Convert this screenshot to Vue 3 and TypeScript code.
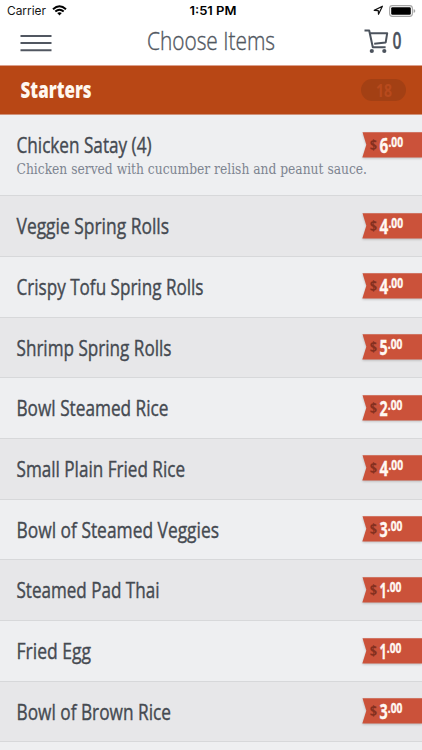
<script setup lang="ts">
interface MenuItem {
  name: string
  width: number
  dollars: string
  digitWidth: number
  note?: string
}

const items: MenuItem[] = [
  { name: 'Chicken Satay (4)', width: 135, dollars: '6', digitWidth: 8.8, note: 'Chicken served with cucumber relish and peanut sauce.' },
  { name: 'Veggie Spring Rolls', width: 152.5, dollars: '4', digitWidth: 8.8 },
  { name: 'Crispy Tofu Spring Rolls', width: 187, dollars: '4', digitWidth: 8.8 },
  { name: 'Shrimp Spring Rolls', width: 155, dollars: '5', digitWidth: 8.2 },
  { name: 'Bowl Steamed Rice', width: 152, dollars: '2', digitWidth: 8.2 },
  { name: 'Small Plain Fried Rice', width: 168.5, dollars: '4', digitWidth: 8.8 },
  { name: 'Bowl of Steamed Veggies', width: 202.5, dollars: '3', digitWidth: 8.2 },
  { name: 'Steamed Pad Thai', width: 143, dollars: '1', digitWidth: 7.2 },
  { name: 'Fried Egg', width: 74.5, dollars: '1', digitWidth: 7.2 },
  { name: 'Bowl of Brown Rice', width: 154.5, dollars: '3', digitWidth: 8.2 },
]
</script>

<template>
  <main class="screen">
    <div class="status">
      <div class="side">
        <svg class="carrier" width="40" height="20"><text x="0" y="15.3" textLength="39" lengthAdjust="spacingAndGlyphs">Carrier</text></svg>
        <svg class="wifi" width="15" height="11" viewBox="0 0 15 11">
          <path d="M1 4.2Q7.5-1.6 14 4.2" />
          <path d="M3.3 6.5Q7.5 2.9 11.7 6.5" />
          <path class="dot" d="M5.2 8.1Q7.5 6.3 9.8 8.1L7.5 10.5Z" />
        </svg>
      </div>
      <svg class="clock" width="48" height="20"><text x="0.5" y="15.3" textLength="47" lengthAdjust="spacingAndGlyphs">1:51 PM</text></svg>
      <div class="side right">
        <svg width="11" height="11" viewBox="0 0 11 11"><path class="arrow" d="M1.2 5.4L9.4 1.2L5.5 9.3L5.3 5.6Z" /></svg>
        <svg width="27" height="12" viewBox="0 0 27 12">
          <rect class="shell" x="0.6" y="0.6" width="22.8" height="10.8" rx="2.8" />
          <rect x="2.2" y="2.2" width="19.6" height="7.6" rx="1.2" />
          <path class="cap" d="M24.6 4Q26.3 4.3 26.3 6T24.6 8Z" />
        </svg>
      </div>
    </div>

    <header class="bar">
      <svg class="burger" width="32" height="18"><path d="M.5 2H31.5M.5 9H31.5M.5 16.3H31.5" /></svg>
      <svg class="title" width="132" height="40"><text x="-1" y="28.7" textLength="128" lengthAdjust="spacingAndGlyphs">Choose Items</text></svg>
      <div class="cart">
        <svg class="trolley" width="25" height="25" viewBox="0 0 25 25">
          <path d="M.5 1.5H5.2L8.8 18.2H21.6M6 4.2H23.2L21.7 13.4L10.2 14.7" />
          <circle cx="7.8" cy="22" r="2.1" /><circle cx="20.3" cy="22" r="2.1" />
        </svg>
        <svg class="count" width="12" height="25"><text x="0.5" y="20" textLength="9" lengthAdjust="spacingAndGlyphs">0</text></svg>
      </div>
    </header>

    <section class="section">
      <svg class="heading" width="80" height="40"><text x="0.6" y="27.7" textLength="71" lengthAdjust="spacingAndGlyphs">Starters</text></svg>
      <span class="pill"><svg width="18" height="22"><text x="1" y="17.5" textLength="16" lengthAdjust="spacingAndGlyphs">18</text></svg></span>
    </section>

    <ul class="list">
      <li v-for="item in items" :key="item.name" class="row" :class="{ tall: item.note }">
        <div class="copy">
          <svg class="name" width="240" height="44"><text x="0.5" y="37.7" :textLength="item.width" lengthAdjust="spacingAndGlyphs">{{ item.name }}</text></svg>
          <svg v-if="item.note" class="note" width="354" height="22"><text x="0.5" y="15.3" textLength="350.5" lengthAdjust="spacingAndGlyphs">{{ item.note }}</text></svg>
        </div>
        <svg class="tag" width="60" height="28">
          <path class="ribbon" d="M.5.3H60V25.5H.3L4.3 12.8Z" />
          <text class="sign" x="7.8" y="18" textLength="7.3" lengthAdjust="spacingAndGlyphs">$</text>
          <text class="dollars" x="17.4" y="20.7" :textLength="item.digitWidth" lengthAdjust="spacingAndGlyphs">{{ item.dollars }}</text>
          <text class="cents" :x="17.6 + item.digitWidth" y="14.9" textLength="14.6" lengthAdjust="spacingAndGlyphs">.00</text>
        </svg>
      </li>
    </ul>
  </main>
</template>

<style>
body { background: #fff; }
</style>

<style scoped>
.screen { width: 100%; height: 750px; overflow: hidden; background: #eeeff1; font-family: "Open Sans", "Noto Sans", sans-serif; }
svg { display: block; flex: none; overflow: visible; }
.status { height: 21px; display: flex; justify-content: space-between; background: #fff; padding: 0 6px 0 6.5px; font-family: Inter, sans-serif; font-size: 12px; }
.side { width: 150px; display: flex; align-items: flex-start; }
.right { justify-content: flex-end; padding-top: 5px; gap: 5px; }
.carrier { fill: #151515; }
.wifi { margin: 5px 0 0 5px; fill: none; stroke: #000; stroke-width: 2; }
.dot { fill: #000; stroke: none; }
.clock { margin-left: 4px; font-weight: 600; fill: #000; }
.arrow { fill: none; stroke: #111; stroke-width: 1.2; stroke-linejoin: round; }
.shell { fill: none; stroke: #a5a5a5; stroke-width: 1.1; }
.cap { fill: #a5a5a5; }
.bar { height: 45px; box-sizing: border-box; display: flex; justify-content: space-between; background: #fff; border-bottom: 1px solid #dc9f8c; padding: 0 18px 0 20px; }
.burger { margin-top: 13px; stroke: #515761; stroke-width: 2; }
.title { margin-left: 13px; fill: #515761; stroke: #515761; stroke-width: .4px; font-size: 26.5px; font-weight: 300; }
.cart { display: flex; gap: 3.5px; padding-top: 8px; }
.trolley { fill: none; stroke: #4c535d; stroke-width: 2; stroke-linejoin: round; }
.trolley circle { fill: #4c535d; stroke: none; }
.count { fill: #4c535d; stroke: #4c535d; stroke-width: .3px; font-size: 22.5px; font-weight: 600; }
.section { height: 49px; box-sizing: border-box; padding: 4px 16px 0 20px; display: flex; justify-content: space-between; background: #b84715; border-bottom: 1px solid #cf927a; }
.heading { fill: #fff8f0; font-size: 22px; font-weight: 800; }
.pill { width: 45px; height: 22px; margin-top: 9px; border-radius: 11px; background: #a34014; display: flex; justify-content: center; fill: #b84a1d; font-size: 17px; font-weight: 700; }
.list { margin: 0; padding: 0; list-style: none; }
.row { height: 60.68px; box-sizing: border-box; border-bottom: 1px solid #d7d8da; display: flex; justify-content: space-between; background: #eeeff1; }
.row:nth-child(even) { background: #e7e7e9; }
.tall { height: 81.3px; }
.copy { padding-left: 16px; }
.name { fill: #454a51; stroke: #454a51; stroke-width: .4px; font-size: 21.5px; font-weight: 500; }
.note { fill: #7d8490; font-family: "DejaVu Serif Condensed", "DejaVu Serif", serif; font-size: 14px; }
.tag { margin: 16.5px 0 0 -60px; font-weight: 700; }
.ribbon { fill: #cb523a; filter: drop-shadow(0 1px 1px #0003); }
.sign { font-size: 14px; fill: #85301f; }
.dollars { font-size: 21.5px; fill: #fff8f2; stroke: #fff8f2; stroke-width: .3px; }
.cents { font-size: 13.5px; fill: #fff8f2; stroke: #fff8f2; stroke-width: .35px; }
</style>
